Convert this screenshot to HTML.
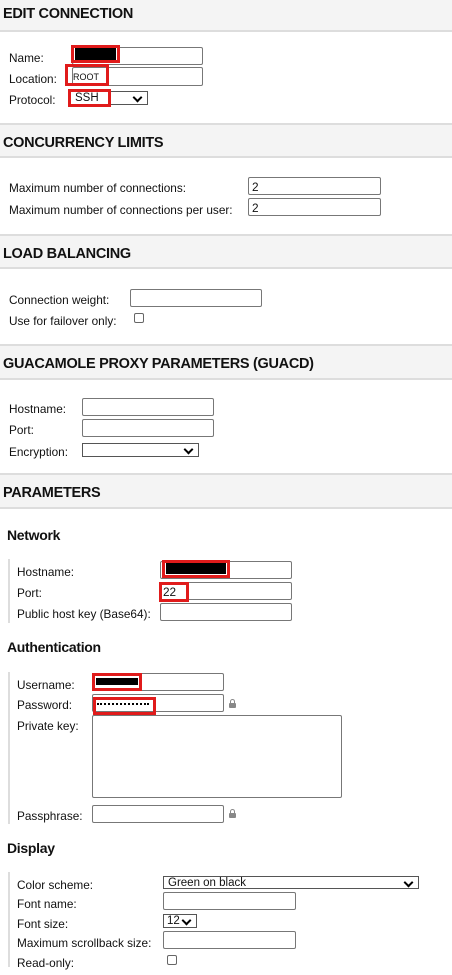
<!DOCTYPE html>
<html><head><meta charset="utf-8"><style>
*{box-sizing:border-box;margin:0;padding:0}
body{width:452px;height:975px;position:relative;background:#fff;font-family:"Liberation Sans",sans-serif;font-size:11.8px;color:#111;overflow:hidden}
.a{position:absolute}
.hd{position:absolute;left:0;width:452px;background:#f4f4f4;border-top:2px solid #ddd;border-bottom:2px solid #ddd;font-weight:bold;font-size:14.5px;padding-left:3px;letter-spacing:-0.3px}
.in{position:absolute;border:1px solid #777;border-radius:2px;background:#fff;height:18px}
.sel{position:absolute;border:1px solid #555;background:#fff;height:14px;font-size:11.5px;line-height:12px;padding-left:4px}
.sel:after{content:"";position:absolute;right:6px;top:2px;width:5px;height:5px;border-right:2px solid #000;border-bottom:2px solid #000;transform:rotate(45deg)}
.lb{position:absolute;white-space:nowrap;margin-top:3px}
.sub{position:absolute;left:7px;font-weight:bold;font-size:14px;letter-spacing:-0.3px;margin-top:1px}
.bar{position:absolute;left:8px;width:2px;background:#ddd}
.red{position:absolute;border:3px solid #e01b1b}
.blk{position:absolute;background:#000}
.cb{position:absolute;width:10px;height:10px;border:1px solid #666;border-radius:2px;background:#fff}
.lock{position:absolute;width:7px;height:5px;background:#888;border-radius:1px}
.lock:before{content:"";position:absolute;left:1px;top:-4px;width:3px;height:4px;border:1px solid #888;border-bottom:none;border-radius:3px 3px 0 0}
.v{position:absolute;white-space:nowrap}
</style></head><body>
<div class="hd" style="top:-2px;height:34px;line-height:33px;border-top:none">EDIT CONNECTION</div>
<div class="lb" style="left:9px;top:48px">Name:</div>
<div class="lb" style="left:9px;top:69px">Location:</div>
<div class="lb" style="left:9px;top:90px">Protocol:</div>
<div class="in" style="left:72px;top:47px;width:131px"></div>
<div class="in" style="left:72px;top:67px;width:131px;height:19px"></div>
<div class="sel" style="left:70px;top:91px;width:78px">SSH</div>
<div class="red" style="left:71px;top:45px;width:49px;height:18px"></div>
<div class="blk" style="left:75px;top:48px;width:41px;height:12px"></div>
<div class="red" style="left:65px;top:64px;width:44px;height:22px"></div>
<div class="v" style="left:73px;top:72px;font-size:9px">ROOT</div>
<div class="red" style="left:68px;top:89px;width:43px;height:18px"></div>

<div class="hd" style="top:123px;height:35px;line-height:36px">CONCURRENCY LIMITS</div>
<div class="lb" style="left:9px;top:178px">Maximum number of connections:</div>
<div class="lb" style="left:9px;top:200px">Maximum number of connections per user:</div>
<div class="in" style="left:248px;top:177px;width:133px"></div>
<div class="v" style="left:252px;top:180px">2</div>
<div class="in" style="left:248px;top:198px;width:133px"></div>
<div class="v" style="left:252px;top:201px">2</div>

<div class="hd" style="top:234px;height:35px;line-height:36px">LOAD BALANCING</div>
<div class="lb" style="left:9px;top:290px">Connection weight:</div>
<div class="lb" style="left:9px;top:311px">Use for failover only:</div>
<div class="in" style="left:130px;top:289px;width:132px"></div>
<div class="cb" style="left:134px;top:313px"></div>

<div class="hd" style="top:344px;height:36px;line-height:37px">GUACAMOLE PROXY PARAMETERS (GUACD)</div>
<div class="lb" style="left:9px;top:399px">Hostname:</div>
<div class="lb" style="left:9px;top:420px">Port:</div>
<div class="lb" style="left:9px;top:442px">Encryption:</div>
<div class="in" style="left:82px;top:398px;width:132px"></div>
<div class="in" style="left:82px;top:419px;width:132px"></div>
<div class="sel" style="left:82px;top:443px;width:117px"></div>

<div class="hd" style="top:473px;height:36px;line-height:37px">PARAMETERS</div>

<div class="sub" style="top:526px">Network</div>
<div class="bar" style="top:559px;height:64px"></div>
<div class="lb" style="left:17px;top:562px">Hostname:</div>
<div class="lb" style="left:17px;top:583px">Port:</div>
<div class="lb" style="left:17px;top:604px">Public host key (Base64):</div>
<div class="in" style="left:160px;top:561px;width:132px"></div>
<div class="in" style="left:160px;top:582px;width:132px"></div>
<div class="in" style="left:160px;top:603px;width:132px"></div>
<div class="red" style="left:162px;top:560px;width:68px;height:18px"></div>
<div class="blk" style="left:166px;top:563px;width:60px;height:11px"></div>
<div class="red" style="left:159px;top:582px;width:30px;height:20px"></div>
<div class="v" style="left:163px;top:585px">22</div>

<div class="sub" style="top:638px">Authentication</div>
<div class="bar" style="top:672px;height:152px"></div>
<div class="lb" style="left:17px;top:675px">Username:</div>
<div class="lb" style="left:17px;top:695px">Password:</div>
<div class="lb" style="left:17px;top:716px">Private key:</div>
<div class="lb" style="left:17px;top:806px">Passphrase:</div>
<div class="in" style="left:92px;top:673px;width:132px"></div>
<div class="in" style="left:92px;top:694px;width:132px"></div>
<div class="in" style="left:92px;top:715px;width:250px;height:83px"></div>
<div class="in" style="left:92px;top:805px;width:132px"></div>
<div class="lock" style="left:229px;top:703px"></div>
<div class="lock" style="left:229px;top:813px"></div>
<div class="red" style="left:92px;top:673px;width:50px;height:18px"></div>
<div class="blk" style="left:96px;top:678px;width:42px;height:7px"></div>
<div class="red" style="left:93px;top:697px;width:63px;height:18px"></div>
<div class="a" style="left:97px;top:703px;width:52px;border-top:2px dotted #000"></div>

<div class="sub" style="top:839px">Display</div>
<div class="bar" style="top:872px;height:95px"></div>
<div class="lb" style="left:17px;top:875px">Color scheme:</div>
<div class="lb" style="left:17px;top:894px">Font name:</div>
<div class="lb" style="left:17px;top:914px">Font size:</div>
<div class="lb" style="left:17px;top:933px">Maximum scrollback size:</div>
<div class="lb" style="left:17px;top:953px">Read-only:</div>
<div class="sel" style="left:163px;top:876px;width:256px;height:13px">Green on black</div>
<div class="in" style="left:163px;top:892px;width:133px"></div>
<div class="sel" style="left:163px;top:914px;width:34px;height:14px;padding-left:3px">12</div>
<div class="in" style="left:163px;top:931px;width:133px"></div>
<div class="cb" style="left:167px;top:955px"></div>
</body></html>
